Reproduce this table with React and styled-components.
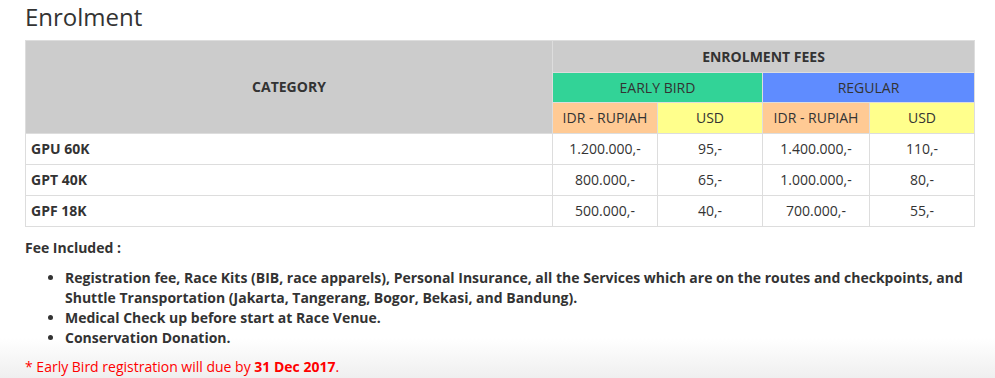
import React from 'react'
import styled, { createGlobalStyle } from 'styled-components'

const GlobalStyle = createGlobalStyle`
  html, body {
    margin: 0;
    padding: 0;
  }
  body {
    font-family: 'Open Sans', 'Noto Sans', sans-serif;
    color: #333;
  }
`

const Page = styled.div`
  height: 378px;
  box-sizing: border-box;
  padding: 2px 20px 0 25px;
  background: linear-gradient(to bottom, #fff 0, #fff 338px, #efefef 378px);
  overflow: hidden;
`

const Title = styled.h2`
  font-size: 24px;
  font-weight: 400;
  line-height: 30px;
  margin: 0 0 8px;
  color: #333;
`

const Table = styled.table`
  width: 949px;
  table-layout: fixed;
  border-collapse: collapse;
  border: 1px solid #333;
  font-size: 14px;
  line-height: 18px;
`

const Col = styled.col`
  width: ${p => p.$w};
`

const Head = styled.th`
  background: ${p => p.$bg || '#ccc'};
  font-weight: ${p => (p.$bold ? 700 : 400)};
  text-align: center;
  padding: ${p => p.$pad || '6px 5px'};
  border: 1px solid #ddd;
  color: #333;
  white-space: nowrap;
`

const Cell = styled.td`
  padding: 6px 5px;
  border: 1px solid #ddd;
  text-align: ${p => (p.$left ? 'left' : 'center')};
  font-weight: ${p => (p.$left ? 700 : 400)};
`

const Label = styled.p`
  margin: 11px 0 10px;
  font-size: 14px;
  line-height: 20px;
  font-weight: 700;
`

const List = styled.ul`
  margin: 0;
  padding-left: 40px;
  font-size: 14px;
  line-height: 20px;
  font-weight: 700;

  li {
    line-height: 20px;
  }
`

const Note = styled.p`
  margin: 9px 0 0;
  font-size: 14px;
  line-height: 20px;
  color: #f00;

  strong {
    font-weight: 700;
  }
`

const colors = {
  green: '#32d397',
  blue: '#5f8cff',
  peach: '#ffca94',
  yellow: '#ffff8c',
}

const rows = [
  ['GPU 60K', '1.200.000,-', '95,-', '1.400.000,-', '110,-'],
  ['GPT 40K', '800.000,-', '65,-', '1.000.000,-', '80,-'],
  ['GPF 18K', '500.000,-', '40,-', '700.000,-', '55,-'],
]

export default function App() {
  return (
    <Page>
      <GlobalStyle />
      <Title>Enrolment</Title>
      <Table>
        <colgroup>
          <Col $w="527px" />
          <Col $w="105px" />
          <Col $w="105px" />
          <Col $w="107px" />
          <Col $w="105px" />
        </colgroup>
        <thead>
          <tr>
            <Head rowSpan={3} $bold>CATEGORY</Head>
            <Head colSpan={4} $bold $pad="7px 5px 6px">ENROLMENT FEES</Head>
          </tr>
          <tr>
            <Head colSpan={2} $bg={colors.green} $pad="6px 5px 5px">EARLY BIRD</Head>
            <Head colSpan={2} $bg={colors.blue} $pad="6px 5px 5px">REGULAR</Head>
          </tr>
          <tr>
            <Head $bg={colors.peach}>IDR - RUPIAH</Head>
            <Head $bg={colors.yellow}>USD</Head>
            <Head $bg={colors.peach}>IDR - RUPIAH</Head>
            <Head $bg={colors.yellow}>USD</Head>
          </tr>
        </thead>
        <tbody>
          {rows.map(r => (
            <tr key={r[0]}>
              <Cell $left>{r[0]}</Cell>
              <Cell>{r[1]}</Cell>
              <Cell>{r[2]}</Cell>
              <Cell>{r[3]}</Cell>
              <Cell>{r[4]}</Cell>
            </tr>
          ))}
        </tbody>
      </Table>
      <Label>Fee Included :</Label>
      <List>
        <li>
          Registration fee, Race Kits (BIB, race apparels), Personal Insurance, all the Services which
          are on the routes and checkpoints, and Shuttle Transportation (Jakarta, Tangerang, Bogor,
          Bekasi, and Bandung).
        </li>
        <li>Medical Check up before start at Race Venue.</li>
        <li>Conservation Donation.</li>
      </List>
      <Note>
        * Early Bird registration will due by <strong>31 Dec 2017</strong>.
      </Note>
    </Page>
  )
}
